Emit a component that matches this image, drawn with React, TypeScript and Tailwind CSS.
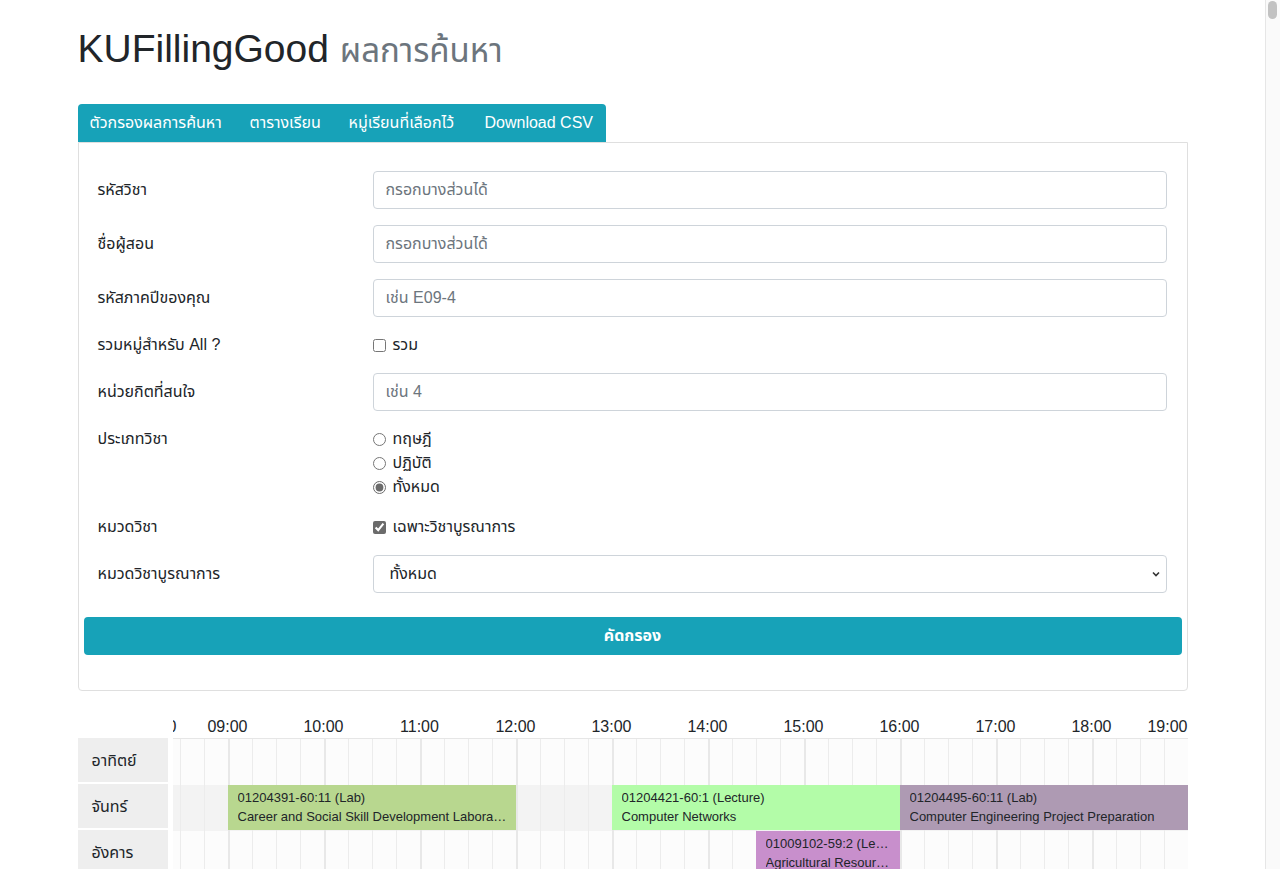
import React from "react";

const FONT = { fontFamily: '"Liberation Sans", "Noto Sans", "Noto Sans Thai", "Noto Sans CJK SC", sans-serif' };

const HOURS = [9, 10, 11, 12, 13, 14, 15, 16, 17, 18];
const DAYS = ["อาทิตย์", "จันทร์", "อังคาร", "พุธ", "พฤหัสบดี", "ศุกร์", "เสาร์"];

type Block = { row: number; left: number; width: number; bg: string; l1: string; l2: string };
const BLOCKS: Block[] = [
  { row: 1, left: 55, width: 288, bg: "bg-[#b8d78f]", l1: "01204391-60:11 (Lab)", l2: "Career and Social Skill Development Laboratory" },
  { row: 1, left: 439, width: 288, bg: "bg-[#b3fca8]", l1: "01204421-60:1 (Lecture)", l2: "Computer Networks" },
  { row: 1, left: 727, width: 288, bg: "bg-[#ae9ab3]", l1: "01204495-60:11 (Lab)", l2: "Computer Engineering Project Preparation" },
  { row: 2, left: 583, width: 144, bg: "bg-[#c88fcc]", l1: "01009102-59:2 (Lecture)", l2: "Agricultural Resources" },
];

const TABS: { t: string; w: string }[] = [
  { t: "ตัวกรองผลการค้นหา", w: "w-[160px]" },
  { t: "ตารางเรียน", w: "w-[99px]" },
  { t: "หมู่เรียนที่เลือกไว้", w: "w-[136px]" },
  { t: "Download CSV", w: "w-[133px]" },
];

function Label({ children }: { children: React.ReactNode }) {
  return <div className="text-[16px] text-[#212529] leading-6">{children}</div>;
}

function TextInput({ placeholder }: { placeholder: string }) {
  return (
    <input
      className="h-[38px] w-full rounded border border-[#ced4da] bg-white px-3 text-[16px] text-[#495057] placeholder:text-[#6c757d] outline-none"
      placeholder={placeholder}
      style={FONT}
    />
  );
}

export default function App() {
  const cells = Array.from({ length: 42 }, (_, i) => 7 + 24 * i);
  return (
    <div className="min-h-screen bg-white text-[#212529]" style={FONT}>
      <div className="w-[1265px]">
        <div className="mx-auto w-[1110px] pt-[25px] pb-10">
          <h1 className="mb-[29px] text-[39px] leading-[48px] text-[#212529]">
            KUFillingGood <span className="text-[33px] text-[#6c757d]">ผลการค้นหา</span>
          </h1>

          <div className="flex w-fit rounded-t bg-[#17a2b8]">
            {TABS.map(({ t, w }) => (
              <div key={t} className={"pl-3 h-[38px] flex items-center text-[16px] text-white " + w}>
                {t}
              </div>
            ))}
          </div>

          <div className="rounded-b border border-[#dfdfdf] pt-[28px] pb-[35px]">
            <div className="pl-[19px] pr-[20px] flex flex-col gap-4">
              <div className="grid grid-cols-[275px_1fr] items-center">
                <Label>รหัสวิชา</Label>
                <TextInput placeholder="กรอกบางส่วนได้" />
              </div>
              <div className="grid grid-cols-[275px_1fr] items-center">
                <Label>ชื่อผู้สอน</Label>
                <TextInput placeholder="กรอกบางส่วนได้" />
              </div>
              <div className="grid grid-cols-[275px_1fr] items-center">
                <Label>รหัสภาคปีของคุณ</Label>
                <TextInput placeholder="เช่น E09-4" />
              </div>
              <div className="grid grid-cols-[275px_1fr] items-center">
                <Label>รวมหมู่สำหรับ All ?</Label>
                <label className="flex items-center gap-[7px] text-[16px] leading-6">
                  <input type="checkbox" className="h-[13px] w-[13px] m-0 accent-[#6b6b6b]" />
                  รวม
                </label>
              </div>
              <div className="grid grid-cols-[275px_1fr] items-center">
                <Label>หน่วยกิตที่สนใจ</Label>
                <TextInput placeholder="เช่น 4" />
              </div>
              <div className="grid grid-cols-[275px_1fr] items-start">
                <Label>ประเภทวิชา</Label>
                <div className="flex flex-col">
                  {["ทฤษฎี", "ปฏิบัติ", "ทั้งหมด"].map((t, i) => (
                    <label key={t} className="flex items-center gap-[7px] text-[16px] leading-6">
                      <input
                        type="radio"
                        name="type"
                        defaultChecked={i === 2}
                        className="h-[13px] w-[13px] m-0 accent-[#6b6b6b]"
                      />
                      {t}
                    </label>
                  ))}
                </div>
              </div>
              <div className="grid grid-cols-[275px_1fr] items-center">
                <Label>หมวดวิชา</Label>
                <label className="flex items-center gap-[7px] text-[16px] leading-6">
                  <input type="checkbox" defaultChecked className="h-[13px] w-[13px] m-0 accent-[#6b6b6b]" />
                  เฉพาะวิชาบูรณาการ
                </label>
              </div>
              <div className="grid grid-cols-[275px_1fr] items-center">
                <Label>หมวดวิชาบูรณาการ</Label>
                <div className="relative">
                  <select
                    className="h-[38px] w-full appearance-none rounded border border-[#ced4da] bg-white pl-4 pr-8 text-[16px] text-[#212529] outline-none"
                    style={FONT}
                    defaultValue="all"
                  >
                    <option value="all">ทั้งหมด</option>
                  </select>
                  <svg
                    className="pointer-events-none absolute right-[6px] top-[15px]"
                    width="10"
                    height="8"
                    viewBox="0 0 10 8"
                  >
                    <path d="M2 2.5 L5 5.5 L8 2.5" fill="none" stroke="#333" strokeWidth="1.6" />
                  </svg>
                </div>
              </div>
            </div>
            <div className="px-[5px] mt-6">
              <button
                className="h-[38px] w-full rounded bg-[#17a2b8] text-[16px] font-bold text-white"
                style={FONT}
              >
                คัดกรอง
              </button>
            </div>
          </div>

          <div className="mt-[19px]">
            <div className="flex">
              <div className="w-[95px] shrink-0" />
              <div className="relative h-[28px] flex-1 overflow-hidden">
                <div className="absolute left-[-40px] top-[5px] w-[44px] text-right text-[16px] leading-6">08:00</div>
                {HOURS.map((h) => (
                  <div
                    key={h}
                    className="absolute top-[5px] w-[50px] text-center text-[16px] leading-6"
                    style={{ left: 55 + 96 * (h - 9) - 25 }}
                  >
                    {String(h).padStart(2, "0")}:00
                  </div>
                ))}
                <div className="absolute right-0 top-[5px] text-[16px] leading-6">19:00</div>
              </div>
            </div>
            <div className="flex gap-[5px]">
              <div className="w-[90px] shrink-0 flex flex-col">
                {DAYS.map((d) => (
                  <div
                    key={d}
                    className="h-[46px] bg-[#eeeeee] border-b-2 border-white flex items-center pl-[14px] pt-[2px] text-[16px]"
                  >
                    {d}
                  </div>
                ))}
              </div>
              <div className="relative flex-1 border-t border-[#e6e6e6] overflow-hidden">
                {DAYS.map((d, i) => (
                  <div key={d} className={"h-[46px] " + (i === 1 ? "bg-[#f3f3f3]" : "bg-[#fcfcfc]")} />
                ))}
                <div className="absolute inset-0 flex pointer-events-none">
                  <div className="w-[7px] shrink-0" />
                  {cells.map((x) => (
                    <div
                      key={x}
                      className={
                        "w-[24px] shrink-0 " +
                        ((x - 55) % 96 === 0
                          ? "border-l-2 border-[#e8e8e8]"
                          : "border-l border-[#ececec]")
                      }
                    />
                  ))}
                  <div className="flex-1 border-l-2 border-[#e8e8e8]" />
                </div>
                {BLOCKS.map((b) => (
                  <div
                    key={b.l1}
                    className={"absolute h-[45px] pl-[10px] pr-2 pt-[3px] text-[13px] leading-[19px] text-[#212529] " + b.bg}
                    style={{ left: b.left, width: b.width, top: b.row * 46 }}
                  >
                    <div className="truncate">{b.l1}</div>
                    <div className="truncate">{b.l2}</div>
                  </div>
                ))}
              </div>
            </div>
          </div>
        </div>
      </div>
      <div className="fixed right-0 top-0 h-full w-[15px] border-l border-[#e6e6e6] bg-[#fafafa]">
        <div className="ml-[2px] mt-[1px] h-[18px] w-[9px] rounded-full bg-[#c2c2c2]" />
      </div>
    </div>
  );
}
